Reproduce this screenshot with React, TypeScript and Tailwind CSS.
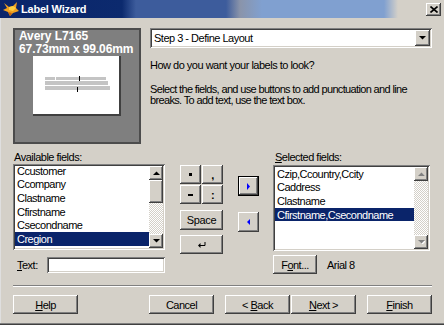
import React from "react";

const RAISED =
  "bg-[#d4d0c8] shadow-[inset_-1px_-1px_#404040,inset_1px_1px_#ffffff,inset_-2px_-2px_#808080,inset_2px_2px_#d4d0c8]";
const SUNKEN =
  "bg-white shadow-[inset_1px_1px_#808080,inset_-1px_-1px_#ffffff,inset_2px_2px_#404040,inset_-2px_-2px_#d4d0c8]";
const DITHER =
  "bg-[repeating-conic-gradient(#d4d0c8_0%_25%,#ffffff_0%_50%)] bg-[length:2px_2px]";

function Arrow({ dir, disabled }: { dir: "up" | "down" | "left" | "right"; disabled?: boolean }) {
  const pts: Record<string, string> = {
    up: "0,4 3.5,0.5 7,4",
    down: "0,0 7,0 3.5,3.5",
    left: "4,0 4,7 0.5,3.5",
    right: "0,0 0,7 3.5,3.5",
  };
  const vb = dir === "up" || dir === "down" ? "0 0 7 4" : "0 0 4 7";
  const w = dir === "up" || dir === "down" ? 7 : 4;
  const h = dir === "up" || dir === "down" ? 4 : 7;
  return (
    <svg width={w} height={h} viewBox={vb}>
      {disabled && <polygon points={pts[dir]} fill="#ffffff" transform="translate(1,1)" />}
      <polygon points={pts[dir]} fill={disabled ? "#808080" : "#000000"} />
    </svg>
  );
}

function Item({ text, selected }: { text: string; selected?: boolean }) {
  return (
    <div
      className={
        "h-[13.6px] flex items-center pl-[2px] whitespace-nowrap " +
        (selected ? "bg-[#0a246a] text-white" : "text-black")
      }
    >
      {text}
    </div>
  );
}

function WinButton({ children, className }: { children: React.ReactNode; className: string }) {
  return <div className={RAISED + " flex items-center justify-center " + className}>{children}</div>;
}

export default function App() {
  return (
    <div
      className="w-[444px] h-[325px] bg-[#d4d0c8] flex flex-col overflow-hidden text-[11px] leading-[12px] tracking-[-0.5px] text-black shadow-[inset_0_-1px_#404040,inset_0_-2px_#808080,inset_1px_0_#dfdfdf]"
      style={{ fontFamily: '"Liberation Sans", Arial, sans-serif' }}
    >
      {/* Title bar */}
      <div className="h-[18px] flex items-center shrink-0">
        <div className="h-[18px] w-[398px] flex items-center bg-[linear-gradient(to_right,#0a246a_0px,#0c2a6e_122px,#3d5c9c_136px,#3d5c9c_226px,#8a94aa_240px,#80a0d0_262px,#80a0d0_384px,#d4d0c8_398px)]">
          <svg width="17" height="16" viewBox="0 0 17 16" className="ml-[3px]">
            <polygon points="1,2 6,6 10,5 14,1 13,7 16,10 10,12 7,15 5,11 0,9 4,7" fill="#f0a020" />
            <polygon points="6,6 10,5 13,7 10,10 6,9" fill="#ffd040" />
            <polygon points="7,15 5,11 9,12" fill="#c06010" />
          </svg>
          <span className="ml-[1px] text-white font-bold text-[11px] tracking-[-0.2px]">Label Wizard</span>
        </div>
        <div className={RAISED + " ml-auto mr-[3px] w-[15px] h-[13px] flex items-center justify-center"}>
          <svg width="8" height="7" viewBox="0 0 8 7">
            <path d="M0.5 0.5 L7.5 6.5 M7.5 0.5 L0.5 6.5" stroke="#000" strokeWidth="1.6" />
          </svg>
        </div>
      </div>

      <div className="flex flex-col pl-[13px] pt-[10px]">
        {/* Top row */}
        <div className="flex h-[116px]">
          <div className="w-[128px] h-[116px] bg-[#7f7f7f] border-2 border-[#4c4c4c] flex flex-col">
            <div className="pl-[4px] text-white font-bold text-[12px] leading-[13px] tracking-[-0.1px]">
              <div>Avery L7165</div>
              <div>67.73mm x 99.06mm</div>
            </div>
            <div className="ml-[18px] w-[88px] h-[60px] bg-white border-r-2 border-b-2 border-[#404040] flex flex-col pl-[12px] pt-[21px] gap-[1px]">
              <div className="w-[61px] h-[3px] bg-[#c4c4c4] relative">
                <div className="absolute left-[34px] top-[-1px] w-[1px] h-[5px] bg-black" />
                <div className="absolute left-[10px] top-0 w-[1px] h-[3px] bg-white" />
              </div>
              <div className="w-[63px] h-[4px] bg-[#c4c4c4]" />
              <div className="w-[65px] h-[4px] bg-[#c4c4c4] relative">
                <div className="absolute left-[32px] top-[1px] w-[1px] h-[5px] bg-black" />
              </div>
            </div>
          </div>

          <div className="ml-[9px] w-[282px] flex flex-col">
            <div className={SUNKEN + " h-[20px] flex items-center p-[2px]"}>
              <span className="pl-[2px] flex-1">Step 3 - Define Layout</span>
              <div className={RAISED + " w-[15px] h-[16px] flex items-center justify-center"}>
                <Arrow dir="down" />
              </div>
            </div>
            <div className="mt-[11px] leading-[13px]">How do you want your labels to look?</div>
            <div className="mt-[12px] leading-[11px] tracking-[-0.65px]">
              Select the fields, and use buttons to add punctuation and line breaks. To add text, use the text box.
            </div>
          </div>
        </div>

        {/* Fields section */}
        <div className="flex items-start">
          {/* Available */}
          <div className="w-[152px] flex flex-col">
            <div className="mt-[7px] h-[12px] pl-[1px]">Available fields:</div>
            <div className={SUNKEN + " mt-[1px] h-[86px] p-[2px] flex"}>
              <div className="flex-1 flex flex-col overflow-hidden">
                <div className="mt-[-2px]">
                  <Item text="Ccustomer" />
                </div>
                <Item text="Ccompany" />
                <Item text="Clastname" />
                <Item text="Cfirstname" />
                <Item text="Csecondname" />
                <Item text="Cregion" selected />
              </div>
              <div className="w-[14px] flex flex-col">
                <div className={RAISED + " h-[14px] flex items-center justify-center"}>
                  <Arrow dir="up" />
                </div>
                <div className={RAISED + " h-[23px]"} />
                <div className={DITHER + " flex-1"} />
                <div className={RAISED + " h-[14px] flex items-center justify-center"}>
                  <Arrow dir="down" />
                </div>
              </div>
            </div>
            <div className="mt-[7px] h-[16px] flex items-center">
              <div className="w-[34px] pl-[4px]">
                <span className="underline">T</span>ext:
              </div>
              <div className={SUNKEN + " w-[118px] h-[16px]"} />
            </div>
          </div>

          {/* Punctuation buttons */}
          <div className="ml-[15px] mt-[21px] flex flex-col w-[43px]">
            <div className="grid grid-cols-[21px_21px] gap-[1px]">
              <WinButton className="h-[19px]">
                <div className="w-[3px] h-[3px] bg-black" />
              </WinButton>
              <WinButton className="h-[19px] font-bold">,</WinButton>
              <WinButton className="h-[19px]">
                <div className="w-[5px] h-[2px] bg-black" />
              </WinButton>
              <WinButton className="h-[19px] font-bold">:</WinButton>
            </div>
            <WinButton className="mt-[6px] h-[20px]">
              <span className="text-[11px] tracking-[-0.3px]">Space</span>
            </WinButton>
            <WinButton className="mt-[5px] h-[19px]">
              <svg width="8" height="6" viewBox="0 0 8 6">
                <path d="M7 0 V3.5 H2" stroke="#000" strokeWidth="1" fill="none" />
                <polygon points="0,3.5 2.5,1 2.5,6" fill="#000" />
              </svg>
            </WinButton>
          </div>

          {/* Move buttons */}
          <div className="ml-[15px] flex flex-col">
            <div className="mt-[32px] w-[21px] h-[20px] border border-black">
              <div className={RAISED + " w-full h-full flex items-center justify-center"}>
                <svg width="3" height="7" viewBox="0 0 3 7">
                  <polygon points="0,0 3,3.5 0,7" fill="#0000ff" />
                </svg>
              </div>
            </div>
            <WinButton className="mt-[16px] w-[21px] h-[20px]">
              <svg width="3" height="6" viewBox="0 0 3 6">
                <polygon points="3,0 0,3 3,6" fill="#0000ff" />
              </svg>
            </WinButton>
          </div>

          {/* Selected */}
          <div className="ml-[14px] w-[157px] flex flex-col">
            <div className="mt-[7px] h-[12px] pl-[2px]">
              <span className="underline">S</span>elected fields:
            </div>
            <div className={SUNKEN + " mt-[2px] h-[86px] p-[2px] flex"}>
              <div className="flex-1 flex flex-col overflow-hidden">
                <Item text="Czip,Ccountry,Ccity" />
                <Item text="Caddress" />
                <Item text="Clastname" />
                <Item text="Cfirstname,Csecondname" selected />
              </div>
              <div className="w-[14px] flex flex-col">
                <div className={RAISED + " h-[14px] flex items-center justify-center"}>
                  <Arrow dir="up" disabled />
                </div>
                <div className={DITHER + " flex-1"} />
                <div className={RAISED + " h-[14px] flex items-center justify-center"}>
                  <Arrow dir="down" disabled />
                </div>
              </div>
            </div>
            <div className="mt-[4px] h-[19px] flex items-center">
              <WinButton className="w-[44px] h-[19px]">
                <span>
                  F<span className="underline">o</span>nt...
                </span>
              </WinButton>
              <span className="ml-[10px]">Arial 8</span>
            </div>
          </div>
        </div>

        {/* Separator */}
        <div className="mt-[11px] w-[419px] h-[2px] border-t border-[#808080] border-b border-b-white" />

        {/* Bottom buttons */}
        <div className="mt-[8px] flex">
          <WinButton className="w-[65px] h-[19px]">
            <span>
              <span className="underline">H</span>elp
            </span>
          </WinButton>
          <WinButton className="ml-[71px] w-[65px] h-[19px]">Cancel</WinButton>
          <WinButton className="ml-[11px] w-[65px] h-[19px]">
            <span>
              &lt; <span className="underline">B</span>ack
            </span>
          </WinButton>
          <WinButton className="ml-[1px] w-[65px] h-[19px]">
            <span>
              <span className="underline">N</span>ext &gt;
            </span>
          </WinButton>
          <WinButton className="ml-[11px] w-[65px] h-[19px]">
            <span>
              <span className="underline">F</span>inish
            </span>
          </WinButton>
        </div>
      </div>
    </div>
  );
}
